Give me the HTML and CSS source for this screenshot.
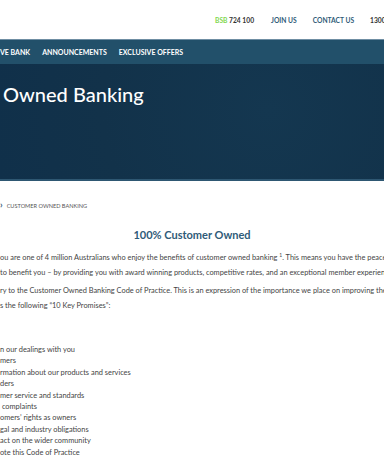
FILE: index.html
```html
<!DOCTYPE html>
<html lang="en">
<head>
    <meta charset="UTF-8">
    <meta name="viewport" content="width=device-width, initial-scale=1.0">
    <title>Customer Owned Banking</title>
    <link rel="stylesheet" href="styles.css">
</head>
<body>
    <header class="topbar">
        <ul class="top-links">
            <li class="bsb"><span class="bsb-label">BSB</span> 724 100</li>
            <li><a href="#">JOIN US</a></li>
            <li><a href="#">CONTACT US</a></li>
            <li class="phone">1300</li>
        </ul>
    </header>

    <nav class="mainnav">
        <a href="#">VE BANK</a>
        <a href="#">ANNOUNCEMENTS</a>
        <a href="#">EXCLUSIVE OFFERS</a>
    </nav>

    <section class="hero">
        <h1>Owned Banking</h1>
    </section>

    <main class="content">
        <div class="breadcrumb">
            <span class="crumb-arrow">&#x203A;</span>
            <span>CUSTOMER OWNED BANKING</span>
        </div>

        <h2>100% Customer Owned</h2>

        <p>ou are one of 4 million Australians who enjoy the benefits of customer owned banking <sup>1</sup>. This means you have the peace<br>to benefit you &ndash; by providing you with award winning products, competitive rates, and an exceptional member experien</p>
        <p>ry to the Customer Owned Banking Code of Practice. This is an expression of the importance we place on improving the<br>s the following &ldquo;10 Key Promises&rdquo;:</p>

        <ol class="promises">
            <li>n our dealings with you</li>
            <li>mers</li>
            <li>rmation about our products and services</li>
            <li>ders</li>
            <li>mer service and standards</li>
            <li>&nbsp;complaints</li>
            <li>omers&rsquo; rights as owners</li>
            <li>gal and industry obligations</li>
            <li>act on the wider community</li>
            <li>ote this Code of Practice</li>
        </ol>
    </main>
</body>
</html>
```

FILE: styles.css
```css
* {
    margin: 0;
    padding: 0;
    box-sizing: border-box;
}

body {
    font-family: Lato, "Liberation Sans", sans-serif;
    background-color: #fff;
    color: #444;
    overflow: hidden;
    white-space: nowrap;
}

a {
    text-decoration: none;
    color: inherit;
}

.topbar {
    height: 40px;
    display: flex;
    align-items: center;
    padding-left: 215px;
    border-bottom: 1px solid #6f8ea3;
}

.top-links {
    list-style: none;
    display: flex;
    gap: 16px;
    font-size: 6.7px;
    font-weight: 700;
    color: #2f5b78;
    margin-top: 1px;
}

.bsb {
    color: #333;
    margin-right: 1px;
}

.bsb-label {
    color: #82d84f;
}

.phone {
    color: #333;
}

.mainnav {
    height: 24px;
    background-color: #22506a;
    display: flex;
    align-items: center;
    gap: 12px;
    font-size: 7px;
    font-weight: 700;
    color: #fff;
}

.hero {
    height: 117px;
    background-color: #12324a;
    background-image: radial-gradient(circle at 70% 40%, #143750 0%, #12324a 60%, #10304a 100%);
    border-bottom: 2px solid #2e5772;
    padding: 18px 0 0 3px;
}

.hero h1 {
    font-size: 20px;
    font-weight: 500;
    color: #fff;
}

.content {
    padding-top: 20px;
}

.breadcrumb {
    display: flex;
    align-items: center;
    gap: 4px;
    font-size: 5.6px;
    color: #555;
    height: 8px;
}

.crumb-arrow {
    color: #2f5b78;
    font-size: 9px;
    font-weight: 700;
    line-height: 8px;
}

h2 {
    text-align: center;
    font-size: 11px;
    font-weight: 700;
    color: #2f5b78;
    margin-top: 19px;
    margin-bottom: 9px;
}

p {
    font-size: 7.4px;
    line-height: 15px;
    margin-bottom: 3px;
}

sup {
    font-size: 5px;
    line-height: 0;
}

.promises {
    list-style: none;
    margin-top: 31px;
    font-size: 7.4px;
    line-height: 11.4px;
}
```
